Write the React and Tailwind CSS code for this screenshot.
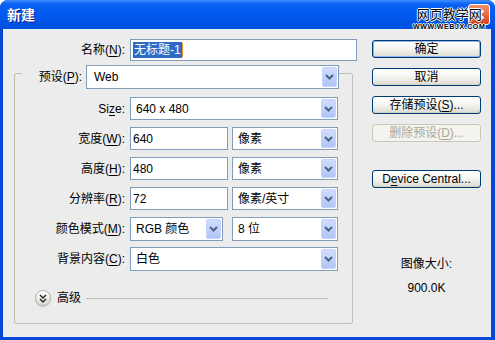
import React from 'react';

const UI = "'Liberation Sans', 'Noto Sans CJK SC', sans-serif";

function Key({ children }) {
  return <span className="underline underline-offset-[2px]">{children}</span>;
}

function Chevron() {
  return (
    <svg width="9" height="6" viewBox="0 0 9 6">
      <path d="M1 1 L4.5 4.5 L8 1" fill="none" stroke="#4d6185" strokeWidth="2" />
    </svg>
  );
}

function Select({ value, className = '' }) {
  return (
    <div className={'flex h-full items-stretch bg-white border border-[#7f9db9] ' + className}>
      <div className="flex-1 flex items-center pl-[5px] whitespace-nowrap overflow-hidden">{value}</div>
      <div className="w-[15px] m-px rounded-[2px] border border-[#c3d3fb] bg-linear-to-b from-[#d0dcfd] to-[#b0c5f7] flex items-center justify-center">
        <Chevron />
      </div>
    </div>
  );
}

function Input({ value, className = '' }) {
  return (
    <div className={'flex h-full items-center bg-white border border-[#7f9db9] pl-[2px] ' + className}>
      {value}
    </div>
  );
}

function Row({ label, children, className = '' }) {
  return (
    <div className={'flex items-center ' + className}>
      <div className="w-[110px] text-right whitespace-nowrap">{label}</div>
      <div className="ml-[5px] flex h-full">{children}</div>
    </div>
  );
}

function Button({ children, primary, disabled }) {
  const base = 'h-[18px] w-[109px] rounded-[3px] border flex items-center justify-center whitespace-nowrap ';
  if (disabled) {
    return <div className={base + 'border-[#c9c7ba] bg-[#f4f3ee] text-[#aca899]'}>{children}</div>;
  }
  return (
    <div
      className={
        base +
        'border-[#003c74] bg-linear-to-b from-white via-[#f4f4f0] to-[#dcdad0] ' +
        (primary ? 'shadow-[inset_0_0_0_1px_#8fb3f0]' : 'shadow-[inset_0_-1px_0_#d6d0c5]')
      }
    >
      {children}
    </div>
  );
}

function AdvancedIcon() {
  return (
    <div className="w-[16px] h-[16px] rounded-full border border-[#b4b2a8] bg-linear-to-b from-white to-[#dcdcd4] flex items-center justify-center shadow-[0_1px_1px_#c8c8c0]">
      <svg width="8" height="9" viewBox="0 0 8 9">
        <path d="M1 1 L4 4 L7 1 M1 5 L4 8 L7 5" fill="none" stroke="#222" strokeWidth="1.4" />
      </svg>
    </div>
  );
}

export default function App() {
  return (
    <div
      className="w-[495px] h-[340px] flex flex-col bg-[#0846d8] rounded-t-[8px] overflow-hidden text-[12px] text-black leading-none"
      style={{ fontFamily: UI }}
    >
      {/* title bar */}
      <div className="relative h-[29px] flex items-center bg-[linear-gradient(180deg,#3d8ffd_0%,#0b61f2_14%,#0058ee_55%,#0050df_100%)]">
        <span className="pl-[7px] text-white font-bold text-[14px] [text-shadow:1px_1px_0_#0a1a80]">新建</span>
        <div className="ml-auto mr-[5px] w-[22px] h-[21px] rounded-[3px] border border-white bg-linear-to-b from-[#f0906a] to-[#d4401a] flex items-center justify-center">
          <svg width="11" height="11" viewBox="0 0 11 11">
            <path d="M1.5 1.5 L9.5 9.5 M9.5 1.5 L1.5 9.5" stroke="white" strokeWidth="2.2" />
          </svg>
        </div>
        {/* watermark over the title bar */}
        <div className="absolute left-[413px] top-[7px] flex flex-col items-center">
          <span className="text-[13px] leading-[15px] text-black [text-shadow:1px_0_0_#fff,-1px_0_0_#fff,0_1px_0_#fff,0_-1px_0_#fff]">网页教学网</span>
          <span className="mt-[1px] text-[7px] leading-[8px] font-bold tracking-[0.6px] text-black [text-shadow:1px_0_0_#fff,-1px_0_0_#fff,0_1px_0_#fff,0_-1px_0_#fff]">WWW.WEBJX.COM</span>
        </div>
      </div>

      {/* body */}
      <div className="flex-1 flex ml-[3px] mr-[4px] mb-[3px] bg-[#ececec]">
        <div className="w-[357px] flex flex-col">
          <div className="mt-[10px] h-[22px] flex items-center">
            <div className="w-[122px] text-right">
              名称(<Key>N</Key>):
            </div>
            <div className="ml-[5px] w-[227px] h-full flex items-center bg-white border border-[#7f9db9] pl-[2px]">
              <span className="bg-[#316ac5] text-white px-px py-[2px]">无标题-1</span>
              <span className="w-px h-[14px] bg-[#e0901e]" />
            </div>
          </div>

          <div className="ml-[11px] mt-[12px] w-[339px] h-[251px] border border-[#c0bfb4] rounded-[2px] flex flex-col">
            <div className="-mt-[9px] h-[24px] flex items-center">
              <div className="w-[7px]" />
              <div className="w-[64px] h-full bg-[#ececec] flex items-center justify-end pr-[4px]">
                预设(<Key>P</Key>):
              </div>
              <Select value="Web" className="w-[253px] pl-[2px]" />
            </div>

            <Row className="mt-[8px] h-[23px]" label={<>Si<Key>z</Key>e:</>}>
              <Select value="640 x 480" className="w-[208px]" />
            </Row>
            <Row className="mt-[7px] h-[23px]" label={<>宽度(<Key>W</Key>):</>}>
              <Input value="640" className="w-[98px]" />
              <Select value="像素" className="ml-[4px] w-[106px]" />
            </Row>
            <Row className="mt-[7px] h-[23px]" label={<>高度(<Key>H</Key>):</>}>
              <Input value="480" className="w-[98px]" />
              <Select value="像素" className="ml-[4px] w-[106px]" />
            </Row>
            <Row className="mt-[7px] h-[23px]" label={<>分辨率(<Key>R</Key>):</>}>
              <Input value="72" className="w-[98px]" />
              <Select value="像素/英寸" className="ml-[4px] w-[106px]" />
            </Row>
            <Row className="mt-[7px] h-[24px]" label={<>颜色模式(<Key>M</Key>):</>}>
              <Select value="RGB 颜色" className="w-[93px]" />
              <Select value="8 位" className="ml-[9px] w-[106px]" />
            </Row>
            <Row className="mt-[6px] h-[24px]" label={<>背景内容(<Key>C</Key>):</>}>
              <Select value="白色" className="w-[208px]" />
            </Row>

            <div className="mt-[19px] h-[16px] flex items-center pl-[20px]">
              <AdvancedIcon />
              <span className="ml-[6px]">高级</span>
              <div className="ml-[5px] w-[242px] h-px bg-[#c0bfb4]" />
            </div>
          </div>
        </div>

        <div className="ml-[12px] w-[109px] flex flex-col items-center">
          <div className="mt-[11px]" />
          <Button primary>确定</Button>
          <div className="mt-[10px]" />
          <Button>取消</Button>
          <div className="mt-[10px]" />
          <Button>
            存储预设(<Key>S</Key>)...
          </Button>
          <div className="mt-[10px]" />
          <Button disabled>
            删除预设(<Key>D</Key>)...
          </Button>
          <div className="mt-[28px]" />
          <Button>
            D<Key>e</Key>vice Central...
          </Button>
          <div className="mt-[70px]">图像大小:</div>
          <div className="mt-[12px]">900.0K</div>
        </div>
      </div>
    </div>
  );
}
